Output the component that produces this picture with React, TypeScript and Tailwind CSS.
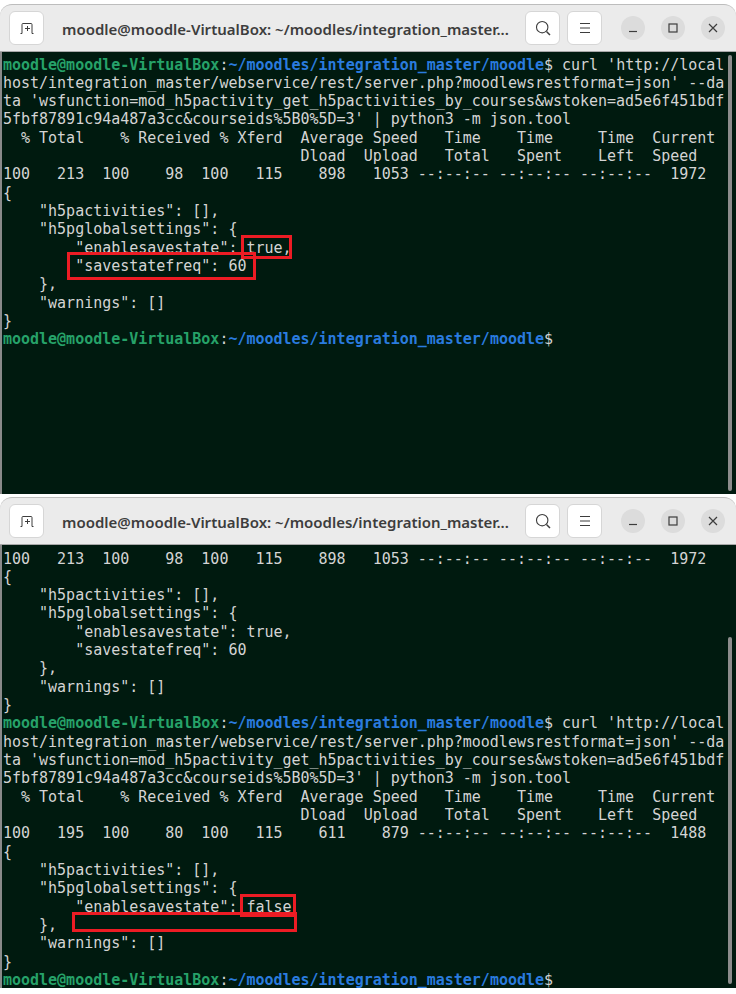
const Prompt = ({ cmd }: { cmd?: string }) => (
  <div className="h-[18.33px]">
    <span className="font-bold text-[#26a269]">moodle@moodle-VirtualBox</span>
    <span>:</span>
    <span className="font-bold text-[#2a7bde]">~/moodles/integration_master/moodle</span>
    <span>$</span>
    {cmd}
  </div>
);

const Line = ({ children }: { children: string }) => <div className="h-[18.33px]">{children}</div>;

const IconButton = ({ children }: { children: React.ReactNode }) => (
  <div className="w-[35px] h-[34px] flex items-center justify-center bg-white rounded-[6px] border border-[#d6d6d6]">
    {children}
  </div>
);

const Circle = ({ children }: { children: React.ReactNode }) => (
  <div className="w-6 h-6 rounded-full bg-[#dcdcdc] flex items-center justify-center">{children}</div>
);

function TitleBar() {
  return (
    <div className="h-12 shrink-0 flex items-center bg-[#ebebeb] rounded-t-[12px] border-t border-[#bdbdbd] border-b-[#a8a8a8] border-b pl-[9px] pr-[11px]">
      <IconButton>
        <svg width="16" height="16" viewBox="0 0 16 16" fill="none" stroke="#3d3d3d" strokeWidth="1">
          <path d="M1.500 13.500h1.500V4.500a1 1 0 0 1 1-1h8a1 1 0 0 1 1 1v9h1.500" />
          <path d="M8.500 6v5M6 8.500h5" />
        </svg>
      </IconButton>
      <div className="ml-[18px] w-[463px] pt-[2px] font-['Noto_Sans'] font-semibold text-[15px] text-[#3d3d3d] whitespace-nowrap">
        moodle@moodle-VirtualBox: ~/moodles/integration_master...
      </div>
      <IconButton>
        <svg width="16" height="16" viewBox="0 0 16 16" fill="none" stroke="#3d3d3d" strokeWidth="1.1">
          <circle cx="7.200" cy="7.200" r="5.700" />
          <path d="M11.500 11.500l3.500 3.500" strokeWidth="1.500" />
        </svg>
      </IconButton>
      <div className="ml-[7px]">
        <IconButton>
          <svg width="14" height="14" viewBox="0 0 14 14" stroke="#3d3d3d" strokeWidth="1">
            <path d="M2 2.500h10M2 7h10M2 11.500h10" />
          </svg>
        </IconButton>
      </div>
      <div className="ml-[19px] flex gap-4">
        <Circle>
          <svg width="12" height="12" viewBox="0 0 12 12" stroke="#3d3d3d" strokeWidth="1.200">
            <path d="M2 9.500h8" />
          </svg>
        </Circle>
        <Circle>
          <svg width="12" height="12" viewBox="0 0 12 12" fill="none" stroke="#3d3d3d" strokeWidth="1.200">
            <rect x="2" y="2" width="8" height="8" />
          </svg>
        </Circle>
        <Circle>
          <svg width="12" height="12" viewBox="0 0 12 12" stroke="#3d3d3d" strokeWidth="1.200">
            <path d="M2 2l8 8M10 2l-8 8" />
          </svg>
        </Circle>
      </div>
    </div>
  );
}

function Window({ height, padClass, barClass, children }: { height: string; padClass: string; barClass: string; children: React.ReactNode }) {
  return (
    <div className={`${height} flex flex-col`}>
      <TitleBar />
      <div className={`relative flex-1 bg-[#001a0f] border-l-2 border-[#8a8a8a] pl-px overflow-hidden font-['DejaVu_Sans_Mono',monospace] text-[15px] leading-[18.33px] tracking-[-0.015px] text-[#d4d4d4] whitespace-pre ${padClass}`}>
        {children}
        <div className={`absolute right-1 w-1 rounded-full bg-[#8c8c8c] ${barClass}`} />
      </div>
    </div>
  );
}

const Command = () => (
  <>
    <Prompt cmd=" curl 'http://local" />
    <Line>host/integration_master/webservice/rest/server.php?moodlewsrestformat=json' --da</Line>
    <Line>ta 'wsfunction=mod_h5pactivity_get_h5pactivities_by_courses&amp;wstoken=ad5e6f451bdf</Line>
    <Line>5fbf87891c94a487a3cc&amp;courseids%5B0%5D=3' | python3 -m json.tool</Line>
    <Line>  % Total    % Received % Xferd  Average Speed   Time    Time     Time  Current</Line>
    <Line>                                 Dload  Upload   Total   Spent    Left  Speed</Line>
  </>
);

export default function App() {
  return (
    <div className="relative w-[736px] h-[994px] bg-white pt-[4px] flex flex-col gap-[3px] overflow-hidden">
      <Window height="h-[490px]" padClass="pt-[3.5px]" barClass="top-[3px] bottom-[3px]">
        <Command />
        <Line>100   213  100    98  100   115    898   1053 --:--:-- --:--:-- --:--:--  1972</Line>
        <Line>{"{"}</Line>
        <Line>{'    "h5pactivities": [],'}</Line>
        <Line>{'    "h5pglobalsettings": {'}</Line>
        <Line>{'        "enablesavestate": true,'}</Line>
        <Line>{'        "savestatefreq": 60'}</Line>
        <Line>{"    },"}</Line>
        <Line>{'    "warnings": []'}</Line>
        <Line>{"}"}</Line>
        <Prompt />
      </Window>
      <Window height="h-[491px]" padClass="pt-[4.5px]" barClass="top-[92px] bottom-[4px]">
        <Line>100   213  100    98  100   115    898   1053 --:--:-- --:--:-- --:--:--  1972</Line>
        <Line>{"{"}</Line>
        <Line>{'    "h5pactivities": [],'}</Line>
        <Line>{'    "h5pglobalsettings": {'}</Line>
        <Line>{'        "enablesavestate": true,'}</Line>
        <Line>{'        "savestatefreq": 60'}</Line>
        <Line>{"    },"}</Line>
        <Line>{'    "warnings": []'}</Line>
        <Line>{"}"}</Line>
        <Command />
        <Line>100   195  100    80  100   115    611    879 --:--:-- --:--:-- --:--:--  1488</Line>
        <Line>{"{"}</Line>
        <Line>{'    "h5pactivities": [],'}</Line>
        <Line>{'    "h5pglobalsettings": {'}</Line>
        <Line>{'        "enablesavestate": false'}</Line>
        <Line>{"    },"}</Line>
        <Line>{'    "warnings": []'}</Line>
        <Line>{"}"}</Line>
        <Prompt />
      </Window>

      {/* red annotation boxes */}
      <div className="absolute left-[241px] top-[235px] w-[51px] h-[24px] border-[3px] border-[#ec1c24]" />
      <div className="absolute left-[67px] top-[252px] w-[189px] h-[28px] border-[3px] border-[#ec1c24]" />
      <div className="absolute left-[240px] top-[894px] w-[56px] h-[23px] border-[3px] border-[#ec1c24]" />
      <div className="absolute left-[72px] top-[912px] w-[225px] h-[20px] border-[3px] border-[#ec1c24]" />
    </div>
  );
}
